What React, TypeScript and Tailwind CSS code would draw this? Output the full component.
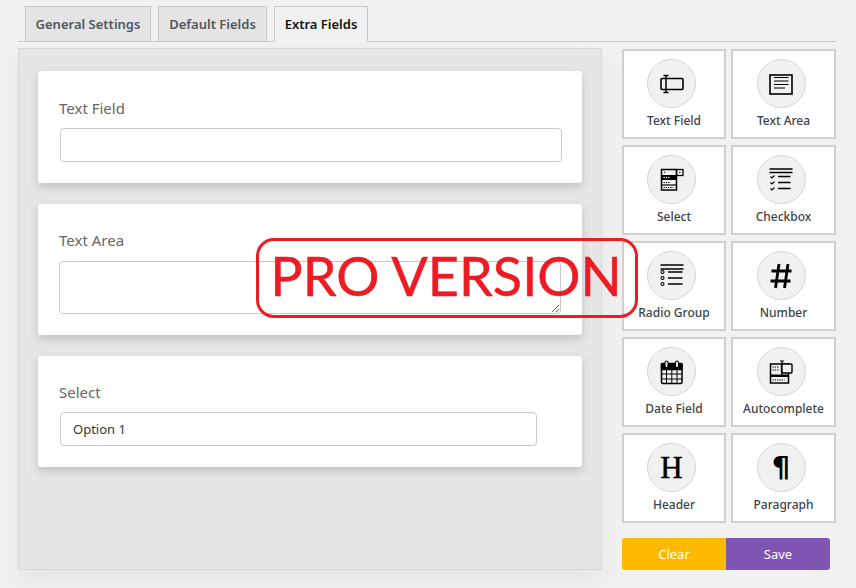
import type { ReactNode } from 'react'

const Stroke = ({ children }: { children: ReactNode }) => (
  <svg width="36" height="36" viewBox="0 0 36 36" fill="none" stroke="#000" strokeWidth="1.5">
    {children}
  </svg>
)

const ICONS: Record<string, ReactNode> = {
  text: (
    <Stroke>
      <rect x="7" y="12.5" width="22" height="11" rx="1" strokeWidth="1.6" />
      <path d="M12 9.5v17M9.5 9.5h5M9.5 26.5h5" strokeWidth="1.5" />
    </Stroke>
  ),
  area: (
    <Stroke>
      <rect x="7" y="9" width="22" height="19" strokeWidth="1.6" />
      <path d="M11 11.5h14.5M11 15h14.5M11 18.5h14.5M11 22h11" strokeWidth="1.2" />
    </Stroke>
  ),
  select: (
    <Stroke>
      <rect x="7.5" y="7.5" width="15" height="20.5" strokeWidth="1.5" />
      <rect x="22.5" y="7.5" width="6.5" height="6" strokeWidth="1.3" />
      <rect x="7.5" y="13" width="15" height="5" fill="#000" stroke="none" />
      <path d="M9.5 15.5h7" stroke="#e0e0e0" strokeDasharray="1.3 1" />
      <path d="M10 10.2h1.2M25.2 10.5h1.2M9.5 20.5h7M9.5 25.5h10" strokeDasharray="1.3 1" strokeWidth="1.1" />
      <path d="M7.5 23h15" strokeWidth="1.2" />
    </Stroke>
  ),
  checkbox: (
    <Stroke>
      <path d="M6.5 7h23M6.5 10.5h23M15 14.5h12.5M15 20.5h12.5M15 26.5h12.5" strokeWidth="1.3" />
      <path d="M7.5 14.5l1.5 1.5 2.5-2.5M7.5 20.5l1.5 1.5 2.5-2.5M7.5 26.5l1.5 1.5 2.5-2.5" strokeWidth="1.1" />
    </Stroke>
  ),
  radio: (
    <Stroke>
      <path d="M6.5 7h23M6.5 11h23M14 14h14.5M14 20h14.5M14 26h14.5" strokeWidth="1.3" />
      <circle cx="8.5" cy="14" r="1.5" strokeWidth="1.1" />
      <circle cx="8.5" cy="20" r="1.5" strokeWidth="1.1" />
      <circle cx="8.5" cy="26" r="1.5" strokeWidth="1.1" />
    </Stroke>
  ),
  number: (
    <Stroke>
      <path d="M16 6l-3.5 24M25 6l-3.5 24M8.5 13h20M7.5 23h20" strokeWidth="2.8" />
    </Stroke>
  ),
  date: (
    <Stroke>
      <rect x="7.5" y="9.5" width="20.5" height="20" rx="1.5" strokeWidth="1.5" />
      <path d="M7.5 10h20.5v5.5h-20.5z" fill="#000" />
      <rect x="11" y="7" width="3" height="6.5" rx="1.5" fill="#f1f1f1" strokeWidth="1.1" />
      <rect x="21.5" y="7" width="3" height="6.5" rx="1.5" fill="#f1f1f1" strokeWidth="1.1" />
      <path d="M7.5 20h20.5M7.5 25h20.5M12.5 15v14.5M17.8 15v14.5M23 15v14.5" strokeWidth="1" />
    </Stroke>
  ),
  auto: (
    <Stroke>
      <rect x="7.5" y="10" width="18" height="19" strokeWidth="1.5" />
      <rect x="7.5" y="20.5" width="18" height="2.5" fill="#000" stroke="none" />
      <rect x="18.5" y="10" width="10.5" height="9" rx="1" fill="#f1f1f1" strokeWidth="1.4" />
      <path d="M19 7v14M17 7h4" strokeWidth="1.2" />
      <path d="M9.5 13h7M9.5 16h7M9.5 26h12" strokeDasharray="1.3 1" strokeWidth="1.1" />
    </Stroke>
  ),
}

const WIDGETS = [
  { label: 'Text Field', icon: ICONS.text },
  { label: 'Text Area', icon: ICONS.area },
  { label: 'Select', icon: ICONS.select },
  { label: 'Checkbox', icon: ICONS.checkbox },
  { label: 'Radio Group', icon: ICONS.radio },
  { label: 'Number', icon: ICONS.number },
  { label: 'Date Field', icon: ICONS.date },
  { label: 'Autocomplete', icon: ICONS.auto },
  {
    label: 'Header',
    icon: (
      <span className="font-['Liberation_Serif',serif] text-[31px] leading-none text-black [-webkit-text-stroke:0.5px_#000]">
        H
      </span>
    ),
  },
  {
    label: 'Paragraph',
    icon: <span className="font-['DejaVu_Sans',sans-serif] text-[29px] font-bold leading-none text-black">¶</span>,
  },
]

function Tab({ label, active, width }: { label: string; active?: boolean; width: string }) {
  return (
    <div
      className={`${width} -mb-px flex h-[36px] items-center justify-center border border-[#c8c8c8] pt-px text-[13px] font-semibold ${
        active ? 'border-b-[#f1f1f1] bg-[#f1f1f1] text-[#111]' : 'bg-[#e4e4e4] text-[#50575e]'
      }`}
    >
      {label}
    </div>
  )
}

function FieldCard({ height, children }: { height: string; children: ReactNode }) {
  return (
    <div className={`${height} rounded-[3px] bg-white pl-[22px] shadow-[0_4px_10px_rgba(0,0,0,0.16)]`}>{children}</div>
  )
}

export default function App() {
  return (
    <div className="relative h-[588px] w-[856px] overflow-hidden bg-[#f1f1f1] font-['Noto_Sans',sans-serif]">
      <div className="ml-[18px] flex w-[818px] gap-[7px] border-b border-[#c8c8c8] pl-[7px] pt-[6px]">
        <Tab label="General Settings" width="w-[126px]" />
        <Tab label="Default Fields" width="w-[109px]" />
        <Tab label="Extra Fields" width="w-[94px]" active />
      </div>

      <div className="ml-[18px] mt-[6px] flex gap-[20px]">
        <div className="flex h-[522px] w-[584px] flex-col gap-[21px] border border-[#d6d6d6] bg-[#e6e6e6] px-[19px] pt-[22px] shadow-[0_10px_24px_rgba(0,0,0,0.05)]">
          <FieldCard height="h-[112px]">
            <div className="-ml-px pt-[27px] text-[15px] leading-[20px] text-[#666]">Text Field</div>
            <div className="mt-[10px] h-[34px] w-[502px] rounded-[4px] border border-[#c8c8c8] bg-white" />
          </FieldCard>
          <FieldCard height="h-[131px]">
            <div className="-ml-px pt-[26px] text-[15px] leading-[20px] text-[#666]">Text Area</div>
            <textarea
              readOnly
              className="-ml-px mt-[11px] block h-[53px] w-[502px] rounded-[4px] border border-[#c8c8c8] bg-white"
            />
          </FieldCard>
          <FieldCard height="h-[111px]">
            <div className="-ml-px pt-[26px] text-[15px] leading-[20px] text-[#666]">Select</div>
            <div className="mt-[10px] flex h-[34px] w-[477px] items-center rounded-[4px] border border-[#c8c8c8] bg-white pl-[12px] pt-px text-[13px] text-[#32373c]">
              Option 1
            </div>
          </FieldCard>
        </div>

        <div className="w-[214px] pt-[1px]">
          <div className="grid grid-cols-[104px_105px] gap-x-[5px] gap-y-[6px]">
            {WIDGETS.map((w) => (
              <div
                key={w.label}
                className="flex h-[90px] flex-col items-center border-2 border-[#d0d0d0] bg-white pt-[8px]"
              >
                <div className="mr-[5px] flex h-[49px] w-[49px] items-center justify-center rounded-full border border-[#d6d6d6] bg-[#f1f1f1]">
                  {w.icon}
                </div>
                <div className="mt-[4px] whitespace-nowrap text-[12px] font-medium leading-[18px] text-[#3c434a]">
                  {w.label}
                </div>
              </div>
            ))}
          </div>
          <div className="mt-[15px] flex h-[32px] w-[208px] overflow-hidden rounded-[3px] text-[13px] text-white">
            <div className="flex w-[104px] items-center justify-center bg-[#ffba00] pt-px">Clear</div>
            <div className="flex w-[104px] items-center justify-center bg-[#7f54b3] pt-px">Save</div>
          </div>
        </div>
      </div>

      <div className="absolute left-[256px] top-[238px] flex h-[80px] w-[382px] items-center justify-center whitespace-nowrap rounded-[18px] border-[3px] border-[#ed1c24] pb-[4px] pr-[2px] font-['Lato',sans-serif] text-[54px] leading-none text-[#ed1c24] [-webkit-text-stroke:0.5px_#ed1c24]">
        PRO VERSION
      </div>
    </div>
  )
}
